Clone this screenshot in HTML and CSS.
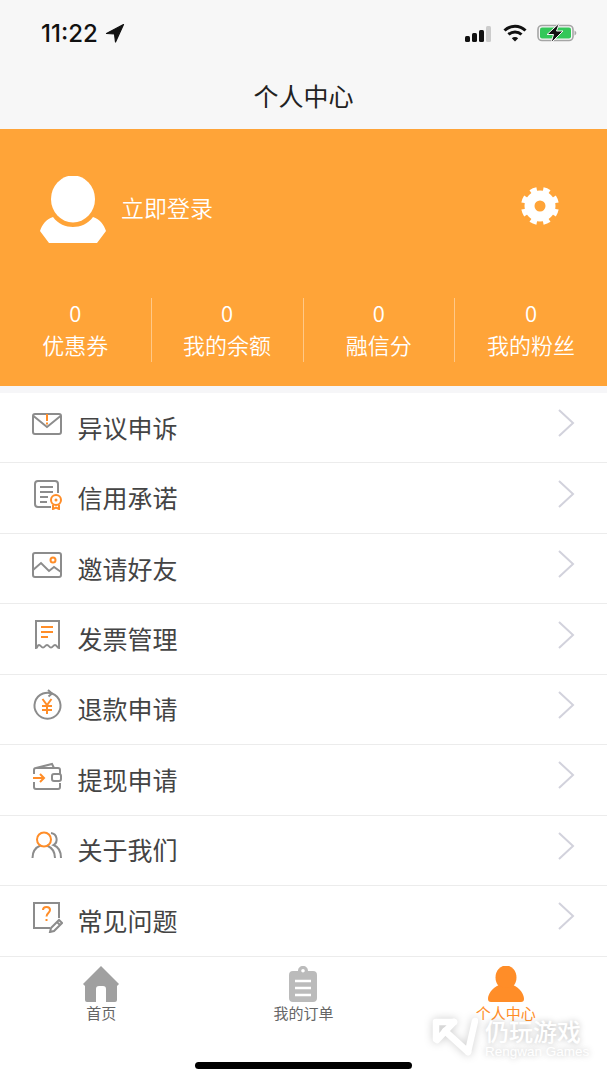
FILE: index.html
```html
<!DOCTYPE html>
<html lang="zh-CN">
<head>
    <meta charset="UTF-8">
    <meta name="viewport" content="width=device-width, initial-scale=1.0">
    <title>个人中心</title>
    <link rel="stylesheet" href="styles.css">
</head>
<body>
    <div class="page">
        <div class="top">
            <div class="statusbar">
                <div class="clock">
                    <span>11:22</span>
                    <svg width="20" height="20" viewBox="0 0 20 20"><path d="M18.500 1.500 1.500 10.500l8 .5 1 8z" fill="#111" stroke="#111" stroke-width="1.200" stroke-linejoin="round"/></svg>
                </div>
                <div class="sysicons">
                    <svg width="28" height="20" viewBox="0 0 28 20">
                        <rect x="0" y="13" width="5" height="6" rx="1.500" fill="#111"/>
                        <rect x="7" y="10" width="5" height="9" rx="1.500" fill="#111"/>
                        <rect x="14" y="7" width="5" height="12" rx="1.500" fill="#111"/>
                        <rect x="21" y="3" width="5" height="16" rx="1.500" fill="#ccc"/>
                    </svg>
                    <svg width="24" height="20" viewBox="0 0 24 20" fill="none" stroke="#111" stroke-width="3">
                        <path d="M1.500 7.500a15 15 0 0 1 21 0"/>
                        <path d="M5.500 11.500a9.500 9.500 0 0 1 13 0"/>
                        <path d="M12 18.500 8.800 15.200a4.600 4.600 0 0 1 6.400 0z" fill="#111" stroke="none"/>
                    </svg>
                    <svg width="40" height="20" viewBox="0 0 40 20">
                        <rect x="1" y="2.500" width="35" height="15" rx="4" fill="none" stroke="#a5a5a5" stroke-width="1.600"/>
                        <rect x="3" y="4.500" width="31" height="11" rx="2" fill="#34c759"/>
                        <path d="M37.500 7.500v5c1-.4 1.800-1.300 1.800-2.500s-.8-2.100-1.800-2.500z" fill="#aaa"/>
                        <path d="M22.500 0 10 11.500h6.500L14 20l12-12h-6.500z" fill="#111" stroke="#f7f7f7" stroke-width="1"/>
                    </svg>
                </div>
            </div>
            <div class="title">个人中心</div>
        </div>

        <div class="profile">
            <div class="user">
                <div class="who">
                    <svg class="avatar" width="66" height="67" viewBox="0 0 66 67" fill="#fff">
                        <ellipse cx="33" cy="23" rx="22" ry="23.500"/>
                        <path d="M13 41c5 7 13 10 20 10s15-3 20-10c7 2 11 8 13 14l-9 12H9L0 55c2-6 6-12 13-14z"/>
                    </svg>
                    <span class="login">立即登录</span>
                </div>
                <svg class="gear" width="40" height="40" viewBox="0 0 40 40" fill="none" stroke="#fff">
                    <circle cx="20" cy="20" r="10.500" stroke-width="10"/>
                    <circle cx="20" cy="20" r="16.500" stroke-width="5" pathLength="80" stroke-dasharray="5 5" stroke-dashoffset="-2.500"/>
                </svg>
            </div>
            <div class="stats">
                <div class="stat"><span>0</span><span>优惠券</span></div>
                <div class="stat"><span>0</span><span>我的余额</span></div>
                <div class="stat"><span>0</span><span>融信分</span></div>
                <div class="stat"><span>0</span><span>我的粉丝</span></div>
            </div>
        </div>

        <div class="menu">
            <div class="row">
                <svg class="icon" viewBox="0 0 32 32" fill="none" stroke="#8c8c8c" stroke-width="2">
                    <rect x="2" y="6" width="28" height="20" rx="2"/>
                    <path d="M2.500 8 16 19 29.500 8"/>
                    <path d="M16 6v7" stroke="#ff8d28"/><path d="M16 14.500v2" stroke="#ff8d28"/>
                </svg>
                <span>异议申诉</span>
                <svg class="arrow" viewBox="0 0 18 28" fill="none" stroke="#d2d2dc" stroke-width="2"><path d="M2 1l14 13L2 27"/></svg>
            </div>
            <div class="row">
                <svg class="icon" viewBox="0 0 32 32" fill="none" stroke="#8c8c8c" stroke-width="2">
                    <path d="M20 29H7a3 3 0 0 1-3-3V6a3 3 0 0 1 3-3h17a3 3 0 0 1 3 3v9"/>
                    <path d="M9 9h13M9 14h13M9 19h8M9 24h7"/>
                    <circle cx="25" cy="22" r="5" stroke="#ff8d28"/>
                    <circle cx="25" cy="22" r="1.500" fill="#ff8d28" stroke="none"/>
                    <path d="M22 27v4l3-1.500 3 1.500v-4" stroke="#ff8d28"/>
                </svg>
                <span>信用承诺</span>
                <svg class="arrow" viewBox="0 0 18 28" fill="none" stroke="#d2d2dc" stroke-width="2"><path d="M2 1l14 13L2 27"/></svg>
            </div>
            <div class="row">
                <svg class="icon" viewBox="0 0 32 32" fill="none" stroke="#8c8c8c" stroke-width="2">
                    <rect x="2" y="4" width="28" height="24" rx="2"/>
                    <path d="M2 21l8-7 8 8 5-4 7 5"/>
                    <circle cx="22" cy="11" r="2.500" stroke="#ff8d28"/>
                </svg>
                <span>邀请好友</span>
                <svg class="arrow" viewBox="0 0 18 28" fill="none" stroke="#d2d2dc" stroke-width="2"><path d="M2 1l14 13L2 27"/></svg>
            </div>
            <div class="row">
                <svg class="icon" viewBox="0 0 32 32" fill="none" stroke="#8c8c8c" stroke-width="2">
                    <path d="M5 29V2h23v27c-2 0-2-3-4-3s-2 2.500-4 2.500-2-2.500-4-2.500-2 2.500-4 2.500-2-2.500-4-2.500-1 3-3 3z"/>
                    <path d="M10 8h12M10 13h12M10 18h7" stroke="#ff8d28"/>
                </svg>
                <span>发票管理</span>
                <svg class="arrow" viewBox="0 0 18 28" fill="none" stroke="#d2d2dc" stroke-width="2"><path d="M2 1l14 13L2 27"/></svg>
            </div>
            <div class="row">
                <svg class="icon" viewBox="0 0 32 32" fill="none" stroke="#8c8c8c" stroke-width="2">
                    <path d="M21 4.500A13 13 0 1 1 12 4.500c3-1 6-1 9 0"/>
                    <path d="M17 1l4 3.500-3.500 3" />
                    <path d="M11.500 10l4.500 6 4.500-6M16 16v9M11 17h10M11 21h10" stroke="#ff8d28"/>
                </svg>
                <span>退款申请</span>
                <svg class="arrow" viewBox="0 0 18 28" fill="none" stroke="#d2d2dc" stroke-width="2"><path d="M2 1l14 13L2 27"/></svg>
            </div>
            <div class="row">
                <svg class="icon" viewBox="0 0 32 32" fill="none" stroke="#8c8c8c" stroke-width="2">
                    <path d="M5 8l16-4 2 4"/>
                    <path d="M3 14v-4a2 2 0 0 1 2-2h22a2 2 0 0 1 2 2v4M3 22v5a2 2 0 0 0 2 2h22a2 2 0 0 0 2-2v-4"/>
                    <rect x="21" y="14" width="9" height="7" rx="2"/>
                    <path d="M2 18h11M9 14l4 4-4 4" stroke="#ff8d28"/>
                </svg>
                <span>提现申请</span>
                <svg class="arrow" viewBox="0 0 18 28" fill="none" stroke="#d2d2dc" stroke-width="2"><path d="M2 1l14 13L2 27"/></svg>
            </div>
            <div class="row">
                <svg class="icon" viewBox="0 0 32 32" fill="none" stroke="#8c8c8c" stroke-width="2">
                    <path d="M20 3a6.500 6.500 0 0 1 2.500 12c4 1.500 7.500 6 7.500 13"/>
                    <path d="M1.500 28c0-6 3-10.500 8-12.500M16 15.500c4.500 2 8 6.500 8 12.500"/>
                    <circle cx="13" cy="9.500" r="7" stroke="#ff8d28"/>
                </svg>
                <span>关于我们</span>
                <svg class="arrow" viewBox="0 0 18 28" fill="none" stroke="#d2d2dc" stroke-width="2"><path d="M2 1l14 13L2 27"/></svg>
            </div>
            <div class="row">
                <svg class="icon" viewBox="0 0 32 32" fill="none" stroke="#8c8c8c" stroke-width="2">
                    <path d="M19 27H3V2h25v15"/>
                    <path d="M12 9c0-4 7-4 7 0 0 3-3.500 3-3.500 6.500M15.500 18v2" stroke="#ff8d28"/>
                    <path d="M20 27l8-8 3 3-8 8-4 1zM26 21l3 3"/>
                </svg>
                <span>常见问题</span>
                <svg class="arrow" viewBox="0 0 18 28" fill="none" stroke="#d2d2dc" stroke-width="2"><path d="M2 1l14 13L2 27"/></svg>
            </div>
        </div>

        <div class="tabbar">
            <div class="tabs">
                <div class="tab">
                    <svg width="36" height="36" viewBox="0 0 36 36" fill="#a0a0a0"><path d="M18 0 36 18l-2 2v14a2 2 0 0 1-2 2H23V23a3 3 0 0 0-3-3h-4a3 3 0 0 0-3 3v13H4a2 2 0 0 1-2-2V20l-2-2z"/></svg>
                    <span>首页</span>
                </div>
                <div class="tab">
                    <svg width="36" height="36" viewBox="0 0 36 36">
                        <path fill="#bbb" fill-rule="evenodd" d="M13 5c0-3 2-5 5-5s5 2 5 5h5a4 4 0 0 1 4 4v23a4 4 0 0 1-4 4H8a4 4 0 0 1-4-4V9a4 4 0 0 1 4-4zM18 3a1.800 1.800 0 1 0 0 3.600A1.800 1.800 0 0 0 18 3z"/>
                        <path d="M10 15h16M10 22h16M10 29h16" stroke="#fff" stroke-width="2.500"/>
                    </svg>
                    <span>我的订单</span>
                </div>
                <div class="tab active">
                    <svg width="36" height="36" viewBox="0 0 36 36" fill="#ff8d28"><ellipse cx="18" cy="11.500" rx="10.500" ry="12"/><path d="M11 19c4 4 10 4 14 0 7 3 11 9 11 14a3 3 0 0 1-3 3H3a3 3 0 0 1-3-3c0-5 4-11 11-14z"/></svg>
                    <span>个人中心</span>
                </div>
            </div>
            <div class="homebar"></div>
        </div>

        <!-- 水印 -->
        <div class="mark">
            <svg width="46" height="40" viewBox="0 0 46 40" fill="none" stroke="#fff" stroke-width="6.500" stroke-linejoin="round" stroke-linecap="round">
                <path d="M22 5H4v17"/>
                <path d="M22 5 5 23"/>
                <path d="M13 14l23 21"/>
                <path d="M43 4l-7 31"/>
            </svg>
            <div class="mark-text">
                <span class="mark-cn">仍玩游戏</span>
                <span class="mark-en">Rengwan Games</span>
            </div>
        </div>
    </div>
</body>
</html>
```

FILE: styles.css
```css
* {
    box-sizing: border-box;
}
body {
    margin: 0;
    background: #fff;
    font-family: "Noto Sans CJK SC", "Noto Sans", sans-serif;
}
svg {
    display: block;
    flex: none;
}
.page {
    position: relative;
    width: 607px;
    height: 1080px;
    overflow: hidden;
}

/* 顶部 */
.top {
    height: 129px;
    background: #f7f7f7;
}
.statusbar {
    display: flex;
    justify-content: space-between;
    align-items: center;
    height: 66px;
    padding: 0 30px 0 41px;
}
.clock {
    display: flex;
    align-items: center;
    gap: 7px;
    font-family: Inter, sans-serif;
    font-size: 24px;
    font-weight: 500;
    color: #111;
}
.sysicons {
    display: flex;
    align-items: center;
    gap: 10px;
}
.title {
    text-align: center;
    font-size: 25px;
    line-height: 58px;
    color: #222;
}

/* 橙色区域 */
.profile {
    height: 257px;
    padding-top: 47px;
    background: #ffa438;
    color: #fff;
}
.user {
    display: flex;
    justify-content: space-between;
    padding: 0 47px 0 40px;
}
.who {
    display: flex;
    align-items: center;
    gap: 15px;
}
.login {
    margin-bottom: 6px;
    font-size: 23px;
    font-weight: 350;
}
.gear {
    margin-top: 10px;
}
.stats {
    display: flex;
    margin-top: 55px;
}
.stat {
    display: flex;
    flex-direction: column;
    align-items: center;
    width: 152.3px;
    height: 64px;
    border-right: 1px solid rgba(255, 255, 255, .4);
    font-size: 22px;
    font-weight: 350;
    line-height: 32px;
}
.stat span:first-child {
    margin-top: -2px;
}
.stat:last-child {
    border-right: none;
}

/* 列表 */
.menu {
    padding-top: 7px;
    background: #f6f6f8;
}
.row {
    display: flex;
    align-items: center;
    gap: 14.500px;
    height: 70.44px;
    padding: 0 32px 2px 31px;
    background: #fff;
    border-bottom: 1px solid #ececec;
    font-size: 25px;
    color: #444;
}
.icon {
    width: 32px;
    height: 32px;
    margin-bottom: 6px;
}
.arrow {
    width: 18px;
    height: 28px;
    margin: 0 0 7px auto;
}

/* 底部导航 */
.tabbar {
    height: 124px;
    background: #fff;
}
.tabs {
    display: flex;
    padding-top: 9px;
}
.tab {
    display: flex;
    flex: 1;
    flex-direction: column;
    align-items: center;
    font-size: 15px;
    line-height: 21px;
    color: #666;
}
.tab.active {
    color: #ff8d28;
}
.homebar {
    width: 217px;
    height: 7px;
    margin: 39px auto 0;
    border-radius: 4px;
    background: #000;
}

/* 水印压在导航上 */
.mark {
    position: absolute;
    left: 432px;
    top: 1017px;
    display: flex;
    gap: 7px;
    color: #fff;
}
.mark svg {
    filter: drop-shadow(0 0 4px rgba(0, 0, 0, .2));
}
.mark-text {
    display: flex;
    flex-direction: column;
    text-shadow: 0 0 6px rgba(0, 0, 0, .28);
}
.mark-cn {
    font-size: 24px;
    font-weight: 500;
    line-height: 27px;
}
.mark-en {
    font-family: "Liberation Sans", sans-serif;
    font-size: 13.500px;
    line-height: 16px;
}
```
